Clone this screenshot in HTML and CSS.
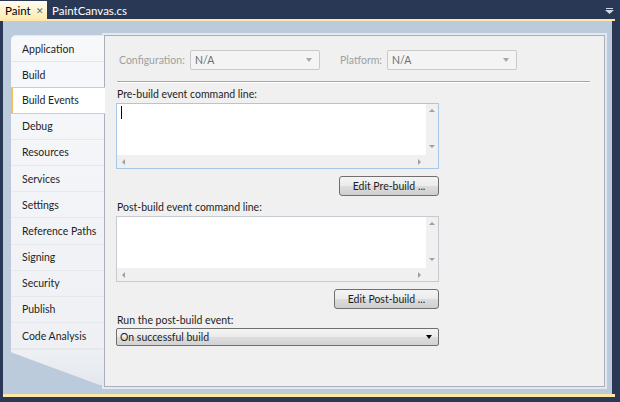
FILE: index.html
```html
<!DOCTYPE html>
<html>
<head>
<meta charset="utf-8">
<link rel="stylesheet" href="styles.css">
</head>
<body>
<div class="tabstrip">
  <div class="doctab active"><span class="tabname">Paint</span><span class="close">✕</span></div>
  <div class="doctab"><span class="tabname">PaintCanvas.cs</span></div>
  <div class="spacer"></div>
  <div class="menuarrow"><svg width="9" height="6" viewBox="0 0 9 6"><rect x="1" y="0" width="7" height="1" fill="#cfd8e6"/><path d="M0 2 H9 L4.5 6 Z" fill="#cfd8e6"/></svg></div>
</div>
<div class="accent"></div>
<div class="frame">
  <div class="sidebar">
    <div class="items">
      <div class="item">Application</div>
      <div class="item">Build</div>
      <div class="item selected">Build Events</div>
      <div class="item">Debug</div>
      <div class="item">Resources</div>
      <div class="item">Services</div>
      <div class="item">Settings</div>
      <div class="item">Reference Paths</div>
      <div class="item">Signing</div>
      <div class="item">Security</div>
      <div class="item">Publish</div>
      <div class="item last">Code Analysis</div>
    </div>
    <div class="tail"></div>
  </div>
  <div class="panel">
    <div class="configrow">
      <span class="dlabel">Configuration:</span>
      <div class="dcombo"><span>N/A</span><span class="garrow"></span></div>
      <span class="dlabel plat">Platform:</span>
      <div class="dcombo"><span>N/A</span><span class="garrow"></span></div>
    </div>
    <div class="sep"></div>
    <div class="label">Pre-build event command line:</div>
    <div class="textbox focused">
      <div class="tb-main">
        <div class="tb-text"><span class="caret"></span></div>
        <div class="vscroll"><span class="up"></span><span class="down"></span></div>
      </div>
      <div class="hscroll"><span class="left"></span><span class="right"></span><span class="corner"></span></div>
    </div>
    <div class="btnrow"><button class="btn pre">Edit Pre-build ...</button></div>
    <div class="label">Post-build event command line:</div>
    <div class="textbox">
      <div class="tb-main">
        <div class="tb-text"></div>
        <div class="vscroll"><span class="up"></span><span class="down"></span></div>
      </div>
      <div class="hscroll"><span class="left"></span><span class="right"></span><span class="corner"></span></div>
    </div>
    <div class="btnrow"><button class="btn post">Edit Post-build ...</button></div>
    <div class="label">Run the post-build event:</div>
    <div class="dropdown"><span>On successful build</span><span class="barrow"></span></div>
  </div>
</div>
<div class="accent bottom"></div>
</body>
</html>
```
FILE: styles.css
```css
* { box-sizing: border-box; }
html, body { margin: 0; padding: 0; }
body {
  width: 620px;
  height: 402px;
  overflow: hidden;
  background: #293955;
  font-family: Lato, "Noto Sans", sans-serif;
  font-size: 10.5px;
  color: #1e1e1e;
}
.tabstrip {
  height: 19px;
  display: flex;
  align-items: flex-end;
}
.doctab {
  height: 18px;
  display: flex;
  align-items: center;
  padding: 0 5px 0 5px;
  color: #ffffff;
  font-size: 11.5px;
}
.doctab.active {
  width: 47px;
  background: linear-gradient(#fffcf2, #ffeab0);
  color: #000;
  padding: 0 3px 0 5px;
  justify-content: space-between;
}
.close { font-size: 9px; color: #6b6b6b; }
.spacer { flex: 1; }
.menuarrow { width: 15px; height: 19px; display: flex; align-items: center; padding-top: 3px; }
.accent {
  height: 2px;
  background: #ffe8a6;
  margin-right: 5px;
}
.accent.bottom { height: 3px; margin-left: 3px; margin-right: 5px; }
.frame {
  height: 373px;
  margin: 0 8px 0 3px;
  background: #bccbdc;
  display: flex;
  padding: 14px 7px 7px 8px;
}
.sidebar {
  width: 93px;
  display: flex;
  flex-direction: column;
  flex-shrink: 0;
  position: relative;
  z-index: 2;
}
.items {
  background: linear-gradient(#f7f8fa, #eef0f4);
  border-top-left-radius: 5px;
  border-top: 1px solid #e3e7ee;
}
.item {
  height: 26.2px;
  display: flex;
  align-items: center;
  padding-left: 11px;
  border-bottom: 1px solid #e6e8ec;
  white-space: nowrap;
}
.item.selected {
  background: #ffffff;
  border-left: 2px solid #f0c060;
  padding-left: 9px;
  margin-right: -1px;
  border-top: 1px solid #c8ced8;
  border-bottom: 1px solid #c8ced8;
  margin-top: -1px;
}
.tail {
  height: 36px;
  background: linear-gradient(#eef0f4, #e4e8ee);
  clip-path: polygon(0 0, 100% 0, 100% 100%, 96% 100%, 0 8%);
}
.panel {
  flex: 1;
  background: #f0f0f0;
  border: 1px solid #a9b0bc;
  box-shadow: 0 0 0 2px #e4e9f0;
  padding: 14px 0 0 11px;
  display: flex;
  flex-direction: column;
}
.configrow {
  display: flex;
  align-items: center;
  height: 20px;
}
.dlabel { color: #a0a0a0; width: 74px; padding-left: 3px; white-space: nowrap; }
.dlabel.plat { width: 50px; margin-left: 17px; }
.dcombo {
  width: 130px;
  height: 20px;
  border: 1px solid #c9c9c9;
  border-radius: 2px;
  background: #f4f4f4;
  color: #6d6d6d;
  display: flex;
  align-items: center;
  justify-content: space-between;
  padding: 0 7px 0 4px;
}
.garrow {
  width: 0; height: 0;
  border-left: 3.5px solid transparent;
  border-right: 3.5px solid transparent;
  border-top: 4px solid #a8a8a8;
}
.sep {
  margin: 11px 14px 0 1px;
  background: #a8a8a8;
  border-bottom: 1px solid #ffffff;
  height: 2px;
}
.label { margin-top: 4px; height: 15px; line-height: 15px; padding-left: 1px; }
.textbox {
  width: 323px;
  height: 66px;
  margin-top: 1px;
  border: 1px solid #c6cbd2;
  background: #ffffff;
  display: flex;
  flex-direction: column;
}
.textbox.focused { border-color: #a8c8e8; }
.tb-main { flex: 1; display: flex; }
.tb-text { flex: 1; padding: 2px 0 0 4px; }
.caret { display: block; width: 1px; height: 13px; background: #000; }
.vscroll {
  width: 12px;
  background: #f0f0f0;
  display: flex;
  flex-direction: column;
  justify-content: space-between;
  align-items: center;
  padding: 5px 0 7px;
}
.up, .down, .left, .right { width: 0; height: 0; display: block; }
.up { border-left: 3px solid transparent; border-right: 3px solid transparent; border-bottom: 3px solid #a0a0a0; }
.down { border-left: 3px solid transparent; border-right: 3px solid transparent; border-top: 3px solid #a0a0a0; }
.hscroll {
  height: 13px;
  background: #f0f0f0;
  display: flex;
  align-items: center;
  padding-left: 5px;
}
.left { border-top: 3px solid transparent; border-bottom: 3px solid transparent; border-right: 3px solid #a0a0a0; }
.right { border-top: 3px solid transparent; border-bottom: 3px solid transparent; border-left: 3px solid #a0a0a0; margin-left: auto; }
.corner { width: 12px; height: 13px; margin-left: 5px; background: #f0f0f0; }
.btnrow { width: 323px; display: flex; justify-content: flex-end; margin-top: 7px; }
.btn {
  height: 20px;
  font: inherit;
  color: #1e1e1e;
  border: 1px solid #707070;
  border-radius: 3px;
  background: linear-gradient(#f4f4f4 0%, #ebebeb 50%, #dddddd 51%, #cfcfcf 100%);
  padding: 0;
}
.btn.pre { width: 100px; }
.btn.post { width: 105px; }
.dropdown {
  width: 323px;
  height: 18px;
  border: 1px solid #707070;
  border-radius: 2px;
  background: linear-gradient(#f4f4f4 0%, #ebebeb 50%, #dddddd 51%, #d2d2d2 100%);
  display: flex;
  align-items: center;
  justify-content: space-between;
  padding: 0 6px 0 3px;
}
.barrow {
  width: 0; height: 0;
  border-left: 3.5px solid transparent;
  border-right: 3.5px solid transparent;
  border-top: 4px solid #000;
}
```
